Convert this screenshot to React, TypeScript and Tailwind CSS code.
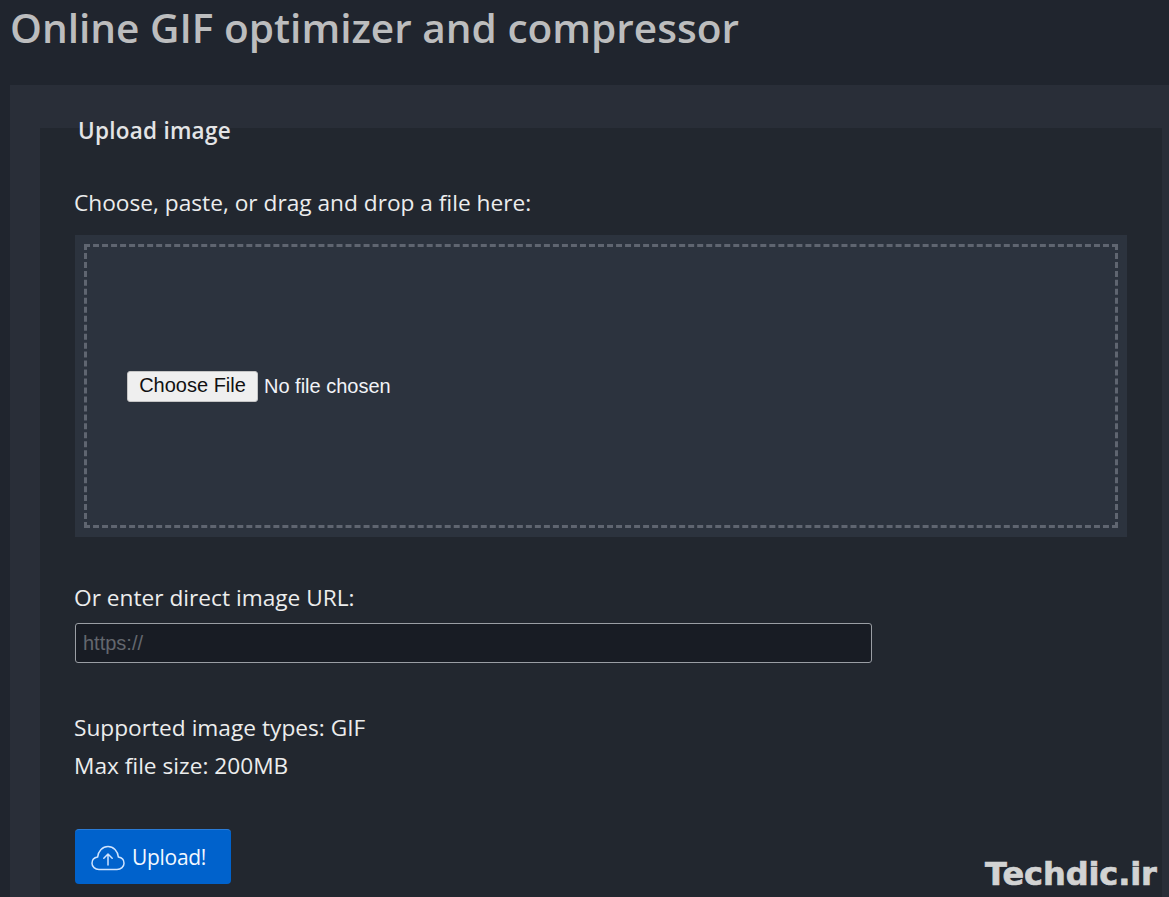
const sans = "font-['Open_Sans','Noto_Sans',sans-serif]";

function CloudIcon() {
  return (
    <svg width="34" height="26" viewBox="0 0 34 26" fill="none" stroke="#cfe4ff" strokeWidth="1.5" strokeLinecap="round" strokeLinejoin="round">
      <path d="M8 24.5C4 24.5 1 21.7 1 18.2C1 15 3.4 12.6 6.6 12.1C7.2 6 11.6 1.5 17 1.5C22.4 1.5 26.8 6 27.4 12.1C30.6 12.6 33 15 33 18.2C33 21.7 30 24.5 26 24.5Z" />
      <path d="M17 20V9M12.8 13.2L17 9L21.2 13.2" />
    </svg>
  );
}

export default function App() {
  return (
    <div className={`h-[897px] overflow-hidden bg-[#20252e] ${sans}`}>
      <h1 className="h-[85px] pl-[10px] pt-[1px] text-[40.6px] leading-[54px] font-semibold text-[#bcbdbe] whitespace-nowrap">
        Online GIF optimizer and compressor
      </h1>

      <div className="ml-[10px] h-[812px] bg-[#292e38]">
        <div className="h-[43px] relative">
          <h2 className="absolute left-[68px] top-[29px] text-[22.5px] leading-[34px] font-semibold text-[#e3e4e6] tracking-[0.25px]">
            Upload image
          </h2>
        </div>

        <div className="ml-[30px] mr-[7px] h-[769px] bg-[#22272f] pl-[35px] pr-[35px] pt-[57px]">
          <p className="-ml-px text-[22.7px] leading-[36px] text-[#eceded]">
            Choose, paste, or drag and drop a file here:
          </p>

          <div className="mt-[14px] h-[302px] bg-[#2c333e] p-[9px]">
            <div className="flex h-full items-center border-[3px] border-dashed border-[#5f6570] pl-[40px]">
              <button className="h-[31px] w-[131px] rounded-[3px] border border-[#c5c5c5] bg-[#efefef] pb-[2px] font-['Liberation_Sans',sans-serif] text-[20px] leading-none text-[#111111]">
                Choose File
              </button>
              <span className="ml-[6px] font-['Liberation_Sans',sans-serif] text-[20px] text-[#f2f4f8]">
                No file chosen
              </span>
            </div>
          </div>

          <p className="-ml-px mt-[43px] text-[22.7px] leading-[36px] text-[#eceded]">
            Or enter direct image URL:
          </p>
          <input
            placeholder="https://"
            className="mt-[7px] block h-[40px] w-[797px] rounded-[3px] border border-[#9a9ea4] bg-[#181c24] px-[7px] font-['Liberation_Sans',sans-serif] text-[20px] placeholder:text-[#63676e]"
          />

          <div className="-ml-px mt-[46px] text-[22.7px] leading-[38px] text-[#eceded]">
            <p>Supported image types: GIF</p>
            <p>Max file size: 200MB</p>
          </div>

          <button className="mt-[44px] flex h-[55px] w-[156px] items-center gap-[7px] rounded-[4px] border-t border-[#2a7bd6] bg-[#0062cc] pl-[16px] pt-[2px] text-[21px] text-[#f3f8ff] tracking-[-0.3px]">
            <CloudIcon />
            Upload!
          </button>
        </div>
      </div>

      <div className="absolute left-[985px] top-[853px] font-['DejaVu_Sans',sans-serif] text-[32px] leading-[42px] font-bold text-[#d2d3d3] tracking-[-0.1px] [-webkit-text-stroke:0.7px_#d2d3d3]">
        Techdic.ir
      </div>
    </div>
  );
}
